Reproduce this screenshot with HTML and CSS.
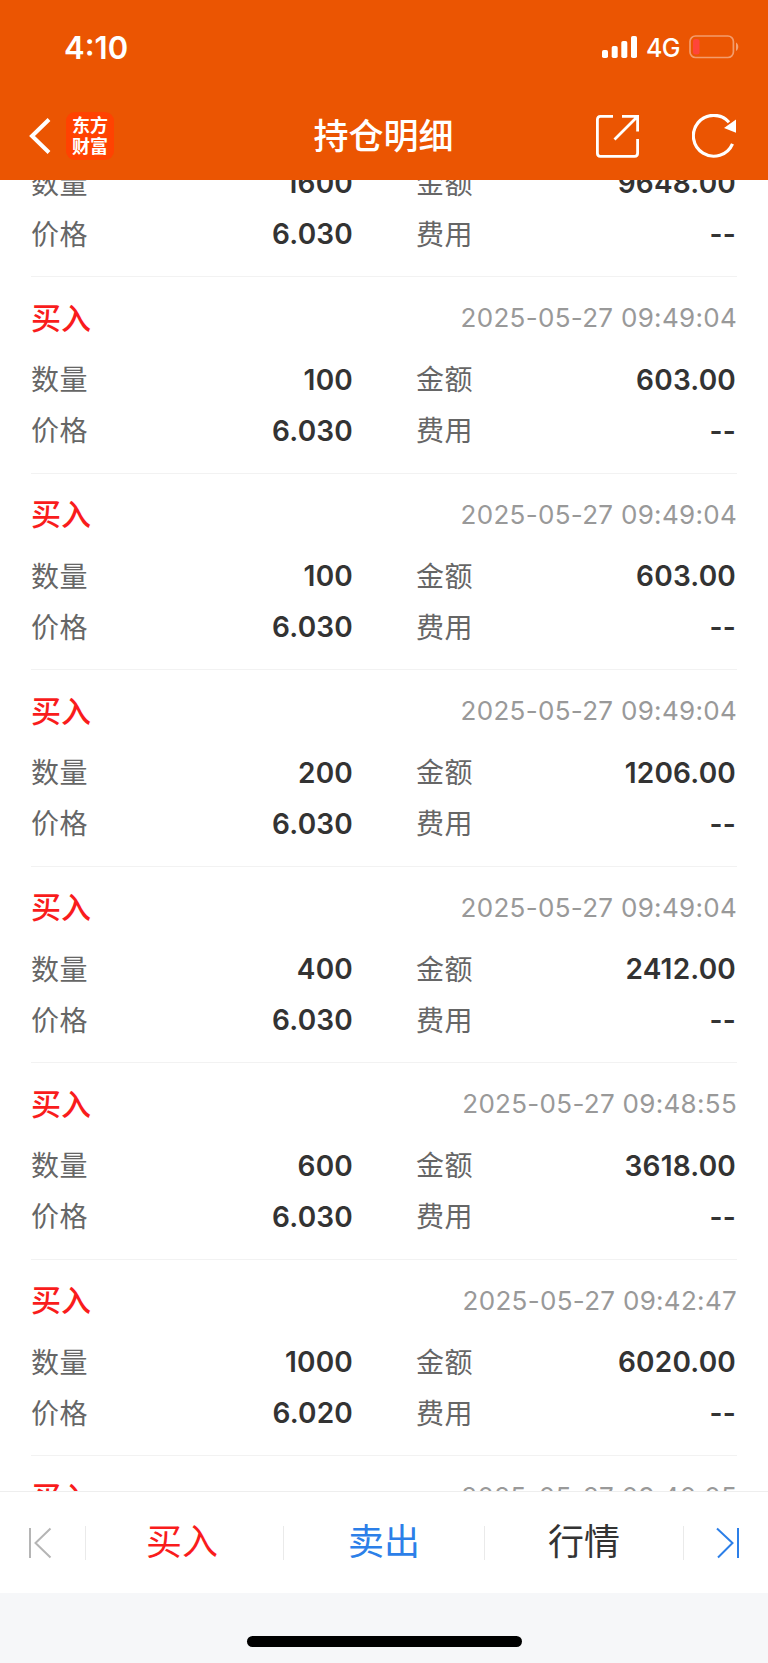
FILE: index.html
```html
<!DOCTYPE html>
<html lang="zh-CN">
<head>
    <meta charset="UTF-8">
    <meta name="viewport" content="width=device-width, initial-scale=1.0">
    <title>持仓明细</title>
    <link rel="stylesheet" href="styles.css">
</head>
<body>
<header>
    <div class="statusBar">
        <span class="time">4:10</span>
        <div class="statusIcons">
            <svg width="36" height="22" viewBox="0 0 36 22" fill="#fff">
                <rect x="0" y="14" width="6" height="8" rx="1.8"/>
                <rect x="9.7" y="10" width="6" height="12" rx="1.8"/>
                <rect x="19.3" y="5" width="6" height="17" rx="1.8"/>
                <rect x="29" y="0" width="6" height="22" rx="1.8"/>
            </svg>
            <span class="network">4G</span>
            <svg class="battery" width="50" height="24" viewBox="0 0 50 24">
                <rect x="1" y="1" width="43.4" height="21.5" rx="5.5" fill="none" stroke="#fff" stroke-opacity=".42" stroke-width="1.7"/>
                <rect x="4" y="4" width="6.5" height="15.5" rx="2.5" fill="#ff453a"/>
                <path d="M47 7.5C50 9 50 14.5 47 16Z" fill="#fff" fill-opacity=".45"/>
            </svg>
        </div>
    </div>
    <div class="navBar">
        <div class="navLeft">
            <svg width="22" height="36" viewBox="0 0 22 36" fill="none" stroke="#fff" stroke-width="4">
                <path d="M20 1.5L3 18L20 34.5"/>
            </svg>
            <div class="logo">东方<br>财富</div>
        </div>
        <h1>持仓明细</h1>
        <div class="navRight">
            <svg width="44" height="44" viewBox="0 0 44 44" fill="none" stroke="#fff" stroke-width="2.8">
                <path d="M18 2.4H5.4Q2.4 2.4 2.4 5.4V39.3Q2.4 42.3 5.4 42.3H39.6Q42.6 42.3 42.6 39.3V25"/>
                <path d="M27 2.4H42.6V17.5M42 3L19.5 25.5"/>
            </svg>
            <svg width="46" height="44" viewBox="0 0 46 44">
                <path d="M40.5 29.8A20.4 20.4 0 1 1 37 8.2" fill="none" stroke="#fff" stroke-width="3.2"/>
                <path d="M44 5.5V18.7L32 14Z" fill="#fff"/>
            </svg>
        </div>
    </div>
</header>

<main>
    <section class="trade">
        <div class="tradeHead"><b>买入</b><time>2025-05-27 09:49:04</time></div>
        <dl>
            <div><dt>数量</dt><dd>1600</dd></div>
            <div><dt>金额</dt><dd>9648.00</dd></div>
            <div><dt>价格</dt><dd>6.030</dd></div>
            <div><dt>费用</dt><dd>--</dd></div>
        </dl>
    </section>
    <section class="trade">
        <div class="tradeHead"><b>买入</b><time>2025-05-27 09:49:04</time></div>
        <dl>
            <div><dt>数量</dt><dd>100</dd></div>
            <div><dt>金额</dt><dd>603.00</dd></div>
            <div><dt>价格</dt><dd>6.030</dd></div>
            <div><dt>费用</dt><dd>--</dd></div>
        </dl>
    </section>
    <section class="trade">
        <div class="tradeHead"><b>买入</b><time>2025-05-27 09:49:04</time></div>
        <dl>
            <div><dt>数量</dt><dd>100</dd></div>
            <div><dt>金额</dt><dd>603.00</dd></div>
            <div><dt>价格</dt><dd>6.030</dd></div>
            <div><dt>费用</dt><dd>--</dd></div>
        </dl>
    </section>
    <section class="trade">
        <div class="tradeHead"><b>买入</b><time>2025-05-27 09:49:04</time></div>
        <dl>
            <div><dt>数量</dt><dd>200</dd></div>
            <div><dt>金额</dt><dd>1206.00</dd></div>
            <div><dt>价格</dt><dd>6.030</dd></div>
            <div><dt>费用</dt><dd>--</dd></div>
        </dl>
    </section>
    <section class="trade">
        <div class="tradeHead"><b>买入</b><time>2025-05-27 09:49:04</time></div>
        <dl>
            <div><dt>数量</dt><dd>400</dd></div>
            <div><dt>金额</dt><dd>2412.00</dd></div>
            <div><dt>价格</dt><dd>6.030</dd></div>
            <div><dt>费用</dt><dd>--</dd></div>
        </dl>
    </section>
    <section class="trade">
        <div class="tradeHead"><b>买入</b><time>2025-05-27 09:48:55</time></div>
        <dl>
            <div><dt>数量</dt><dd>600</dd></div>
            <div><dt>金额</dt><dd>3618.00</dd></div>
            <div><dt>价格</dt><dd>6.030</dd></div>
            <div><dt>费用</dt><dd>--</dd></div>
        </dl>
    </section>
    <section class="trade">
        <div class="tradeHead"><b>买入</b><time>2025-05-27 09:42:47</time></div>
        <dl>
            <div><dt>数量</dt><dd>1000</dd></div>
            <div><dt>金额</dt><dd>6020.00</dd></div>
            <div><dt>价格</dt><dd>6.020</dd></div>
            <div><dt>费用</dt><dd>--</dd></div>
        </dl>
    </section>
    <section class="trade">
        <div class="tradeHead"><b>买入</b><time>2025-05-27 09:40:05</time></div>
    </section>
</main>

<nav class="toolbar">
    <div class="prev">
        <svg width="24" height="32" viewBox="0 0 24 32" fill="none" stroke="#b5b5b5" stroke-width="2">
            <path d="M2 1V31M22.5 1.5L7.5 16L22.5 30.5"/>
        </svg>
    </div>
    <div class="buy">买入</div>
    <div class="sell">卖出</div>
    <div class="quote">行情</div>
    <div class="next">
        <svg width="24" height="32" viewBox="0 0 24 32" fill="none" stroke="#2c7fe8" stroke-width="2">
            <path d="M22 1V31M1 1.5L16.5 16L2 30.5"/>
        </svg>
    </div>
</nav>
<footer>
    <div class="homeIndicator"></div>
</footer>
</body>
</html>
```
FILE: styles.css
```css
*{
    box-sizing: border-box;
}
body{
    display: flex;
    flex-direction: column;
    margin: 0;
    height: 1663px;
    overflow: hidden;
    font-family: Inter, "Noto Sans CJK SC", sans-serif;
    background-color: #fff;
}
svg{
    display: block;
}
header{
    flex: none;
    height: 180px;
    color: #fff;
    background-color: #eb5502;
}
.statusBar{
    display: flex;
    justify-content: space-between;
    align-items: center;
    height: 94px;
    padding: 0 29px 0 64px;
}
.time{
    font-size: 31px;
    font-weight: 600;
}
.statusIcons{
    display: flex;
    align-items: center;
}
.network{
    margin: 2px 9px 0 8px;
    font-size: 25px;
    font-weight: 500;
    letter-spacing: -0.5px;
}
.navBar{
    display: grid;
    grid-template-columns: 1fr auto 1fr;
    align-items: center;
    height: 84px;
    padding: 0 30px 0 29px;
}
.navLeft{
    display: flex;
    align-items: center;
    gap: 15px;
}
.logo{
    width: 48px;
    height: 48px;
    padding-top: 2px;
    border-radius: 9px;
    background-color: #ff4201;
    font-family: "Noto Sans CJK SC", sans-serif;
    font-size: 18px;
    font-weight: 700;
    line-height: 20.5px;
    text-align: center;
}
h1{
    margin: 0;
    padding-bottom: 5px;
    font-size: 35px;
    font-weight: 500;
}
.navRight{
    display: flex;
    justify-content: flex-end;
    gap: 53px;
}

/* list, scrolled half way into the first trade */
main{
    flex: 1;
    min-height: 0;
    overflow: hidden;
    padding: 0 31px;
}
.trade{
    height: 196.5px;
    padding-top: 21px;
    border-bottom: 1px solid #f2f2f2;
}
.trade:first-child{
    margin-top: -99.5px;
}
.tradeHead{
    display: flex;
    justify-content: space-between;
    align-items: center;
    height: 39px;
    margin-bottom: 16.5px;
}
.tradeHead b{
    padding-bottom: 4px;
    color: #f91c1c;
    font-size: 30px;
    font-weight: 500;
}
.tradeHead time{
    color: #999;
    font-size: 26px;
    letter-spacing: 0.3px;
}
dl{
    display: grid;
    grid-template-columns: 322px 320px;
    grid-auto-rows: 51.3px;
    column-gap: 63px;
    margin: 0;
}
dl div{
    display: flex;
    justify-content: space-between;
    align-items: center;
}
dt{
    padding-bottom: 2px;
    color: #666;
    font-size: 28px;
    letter-spacing: 0.5px;
}
dd{
    margin: 0;
    padding-top: 1px;
    color: #333;
    font-size: 28px;
    font-weight: 600;
    letter-spacing: 0.2px;
}

.toolbar{
    flex: none;
    display: grid;
    grid-template-columns: 86px 198px 201px 199px 84px;
    align-items: center;
    height: 102px;
    border-top: 1px solid #eee;
    font-size: 36px;
    line-height: 34px;
}
.toolbar > div{
    display: flex;
    align-items: center;
    justify-content: center;
    height: 34px;
    padding-bottom: 1px;
    border-right: 1px solid #eaeaea;
}
.toolbar .prev{
    justify-content: flex-start;
    padding: 0 0 0 28px;
}
.toolbar .next{
    justify-content: flex-end;
    padding: 0 28px 0 0;
    border-right: none;
}
.toolbar .buy{
    padding-right: 5px;
    color: #f91c1c;
}
.sell{
    color: #2c7fe8;
}
.quote{
    color: #333;
}
footer{
    flex: none;
    display: flex;
    justify-content: center;
    height: 70px;
    padding-top: 43px;
    background-color: #f6f7f9;
}
.homeIndicator{
    width: 275px;
    height: 11px;
    border-radius: 6px;
    background-color: #000;
}
```
